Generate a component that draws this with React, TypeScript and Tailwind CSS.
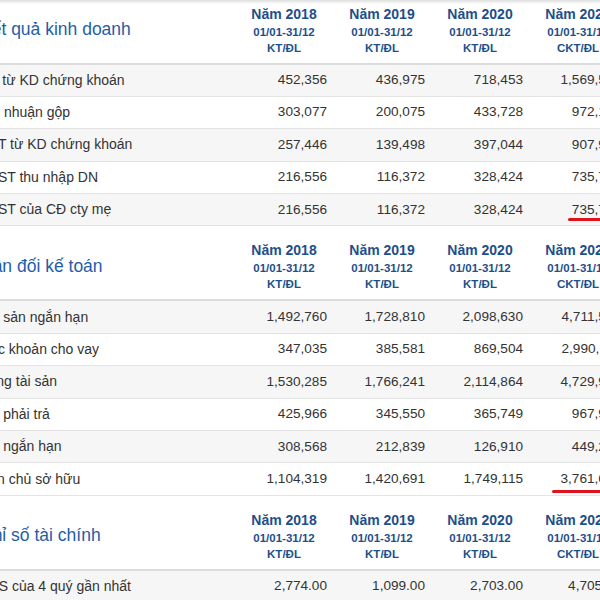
import React from "react";

const years = [
  { year: "Năm 2018", period: "01/01-31/12", audit: "KT/ĐL" },
  { year: "Năm 2019", period: "01/01-31/12", audit: "KT/ĐL" },
  { year: "Năm 2020", period: "01/01-31/12", audit: "KT/ĐL" },
  { year: "Năm 2021", period: "01/01-31/12", audit: "CKT/ĐL" },
];

type Row = { label: string; values: string[]; mark?: string };

const sections: { title: string; rows: Row[] }[] = [
  {
    title: "Kết quả kinh doanh",
    rows: [
      { label: "DT từ KD chứng khoán", values: ["452,356", "436,975", "718,453", "1,569,536"] },
      { label: "Lợi nhuận gộp", values: ["303,077", "200,075", "433,728", "972,125"] },
      { label: "LNT từ KD chứng khoán", values: ["257,446", "139,498", "397,044", "907,951"] },
      { label: "LNST thu nhập DN", values: ["216,556", "116,372", "328,424", "735,712"] },
      { label: "LNST của CĐ cty mẹ", values: ["216,556", "116,372", "328,424", "735,712"], mark: "left-[39px] bottom-[4px]" },
    ],
  },
  {
    title: "Cân đối kế toán",
    rows: [
      { label: "Tài sản ngắn hạn", values: ["1,492,760", "1,728,810", "2,098,630", "4,711,542"] },
      { label: "Các khoản cho vay", values: ["347,035", "385,581", "869,504", "2,990,118"] },
      { label: "Tổng tài sản", values: ["1,530,285", "1,766,241", "2,114,864", "4,729,936"] },
      { label: "Nợ phải trả", values: ["425,966", "345,550", "365,749", "967,928"] },
      { label: "Nợ ngắn hạn", values: ["308,568", "212,839", "126,910", "449,213"] },
      { label: "Vốn chủ sở hữu", values: ["1,104,319", "1,420,691", "1,749,115", "3,761,608"], mark: "left-[23px] bottom-[2px]" },
    ],
  },
  {
    title: "Chỉ số tài chính",
    rows: [
      { label: "EPS của 4 quý gần nhất", values: ["2,774.00", "1,099.00", "2,703.00", "4,705.00"] },
      { label: "BVPS cơ bản", values: ["12,611.00", "13,010.00", "15,620.00", "14,219.00"] },
    ],
  },
];

function Section({ title, rows, first }: { title: string; rows: Row[]; first?: boolean }) {
  return (
    <div className={first ? "-mt-[10.5px]" : ""}>
      <div className="flex h-[75px] border-b-2 border-[#dcdcdc]">
        <div className="flex w-[255px] items-center pt-[6px] text-[17.5px] text-[#1f5ea6]">{title}</div>
        {years.map((y) => (
          <div key={y.year} className="flex w-[98px] flex-col items-center pt-[14px] font-bold text-[#1d4f8b]">
            <span className="text-[14px] leading-[20px]">{y.year}</span>
            <span className="text-[11.5px] leading-[16px]">{y.period}</span>
            <span className="text-[11.5px] leading-[16px]">{y.audit}</span>
          </div>
        ))}
      </div>
      {rows.map((row, i) => (
        <div
          key={row.label}
          className={`flex h-[32.4px] items-stretch border-b border-[#e4e4e4] text-[14px] text-[#333] ${
            i % 2 === 0 ? "bg-[#f6f6f6]" : "bg-white"
          }`}
        >
          <div className="flex w-[255px] items-center whitespace-nowrap">{row.label}</div>
          {row.values.map((v, j) => (
            <div key={j} className="relative flex w-[98px] items-center justify-end pr-[6px] text-[13.6px]">
              {v}
              {row.mark && j === 3 && (
                <span className={`absolute ${row.mark} h-[3px] w-[70px] rounded-full bg-[#e0121c]`} />
              )}
            </div>
          ))}
        </div>
      ))}
    </div>
  );
}

export default function App() {
  return (
    <div className="relative h-[600px] w-[600px] overflow-hidden bg-white font-['Liberation_Sans',Arial,sans-serif]">
      <div className="-ml-[20px] w-[647px]">
        {sections.map((s, i) => (
          <Section key={s.title} title={s.title} rows={s.rows} first={i === 0} />
        ))}
      </div>
      <div className="absolute left-0 top-0 h-[4px] w-full bg-linear-to-b from-[#dedede] to-transparent" />
    </div>
  );
}
